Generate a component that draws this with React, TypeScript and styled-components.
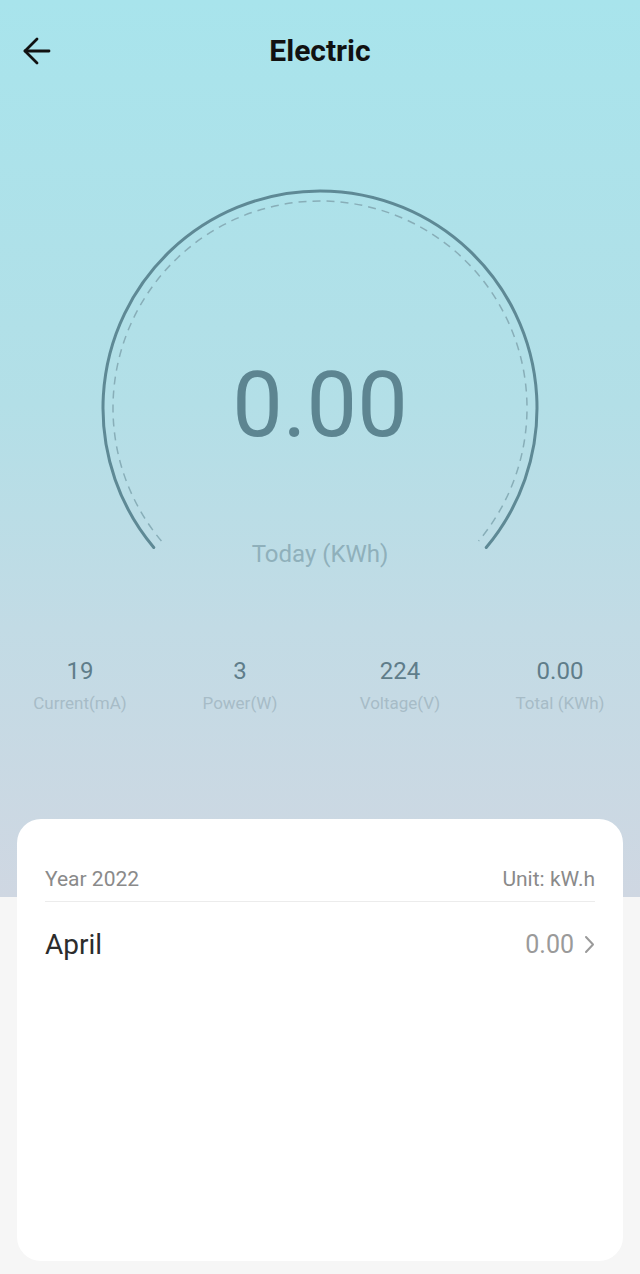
import styled, { createGlobalStyle } from 'styled-components'

const GlobalStyle = createGlobalStyle`
  html, body {
    margin: 0;
    padding: 0;
    background: #f6f6f6;
  }
  * {
    box-sizing: border-box;
  }
`

const Page = styled.div`
  min-height: 1274px;
  font-family: Roboto, "Noto Sans", sans-serif;
  background:
    linear-gradient(180deg, #a8e4ec 0%, #b3dfe7 45%, #c2dbe5 70%, #cfd7e2 100%) 0 0 / 100% 897px no-repeat,
    #f6f6f6;
  padding-bottom: 12px;
`

const Header = styled.div`
  height: 102px;
  display: grid;
  grid-template-columns: 1fr auto 1fr;
  align-items: center;
  padding: 0 22px;
`

const BackButton = styled.button`
  justify-self: start;
  width: 30px;
  height: 30px;
  padding: 0;
  border: none;
  background: none;
  display: flex;
  align-items: center;
  justify-content: center;
  cursor: pointer;
`

const Title = styled.h1`
  margin: 0;
  font-size: 30px;
  font-weight: 700;
  color: #111;
  line-height: 36px;
`

const GaugeWrap = styled.div`
  position: relative;
  width: 440px;
  height: 384px;
  margin: 84px auto 0;
  display: flex;
  flex-direction: column;
  align-items: center;
`

const GaugeArt = styled.svg`
  position: absolute;
  inset: 0;
`

const GaugeValue = styled.div`
  position: relative;
  margin-top: 175px;
  font-size: 90px;
  line-height: 90px;
  color: #5d8591;
`

const GaugeLabel = styled.div`
  position: relative;
  margin-top: 92px;
  font-size: 24px;
  line-height: 22px;
  color: #8fb0bb;
`

const Stats = styled.div`
  display: grid;
  grid-template-columns: repeat(4, 1fr);
  margin-top: 88px;
`

const Stat = styled.div`
  display: flex;
  flex-direction: column;
  align-items: center;
  gap: 9px;
`

const StatValue = styled.div`
  font-size: 24px;
  line-height: 26px;
  color: #5f7d8a;
`

const StatLabel = styled.div`
  font-size: 17px;
  line-height: 20px;
  color: #a7bcc7;
`

const Card = styled.div`
  margin: 106px 17px 0;
  height: 442px;
  background: #fff;
  border-radius: 24px;
  padding: 46px 28px 0;
`

const CardHead = styled.div`
  display: flex;
  justify-content: space-between;
  align-items: center;
  height: 28px;
  margin-bottom: 8px;
  font-size: 21px;
  color: #8a8a8a;
`

const Divider = styled.div`
  height: 1px;
  background: #ececec;
`

const MonthRow = styled.div`
  display: flex;
  justify-content: space-between;
  align-items: center;
  height: 30px;
  margin-top: 27px;
`

const Month = styled.div`
  font-size: 28px;
  color: #2c2c2c;
`

const MonthValue = styled.div`
  display: flex;
  align-items: center;
  gap: 10px;
  font-size: 25px;
  color: #9a9a9a;
`

const stats = [
  { value: '19', label: 'Current(mA)' },
  { value: '3', label: 'Power(W)' },
  { value: '224', label: 'Voltage(V)' },
  { value: '0.00', label: 'Total (KWh)' },
]

const arcPath = (r: number) => {
  const cx = 220
  const cy = 222
  const a1 = (140 * Math.PI) / 180
  const a2 = (40 * Math.PI) / 180
  const x1 = cx + r * Math.cos(a1)
  const y1 = cy + r * Math.sin(a1)
  const x2 = cx + r * Math.cos(a2)
  const y2 = cy + r * Math.sin(a2)
  return `M ${x1} ${y1} A ${r} ${r} 0 1 1 ${x2} ${y2}`
}

const App = () => {
  return (
    <Page>
      <GlobalStyle />
      <Header>
        <BackButton aria-label="Back">
          <svg width="30" height="30" viewBox="0 0 30 30" fill="none" stroke="#111" strokeWidth={2.8} strokeLinecap="round" strokeLinejoin="round">
            <path d="M27 15H3" />
            <path d="M15 3L3 15L15 27" />
          </svg>
        </BackButton>
        <Title>Electric</Title>
        <div />
      </Header>

      <GaugeWrap>
        <GaugeArt width="440" height="384" viewBox="0 0 440 384" fill="none">
          <path d={arcPath(217)} stroke="#5e8995" strokeWidth={3} strokeLinecap="round" />
          <path d={arcPath(207)} stroke="#88aeb8" strokeWidth={1.5} strokeDasharray="8 6" />
        </GaugeArt>
        <GaugeValue>0.00</GaugeValue>
        <GaugeLabel>Today (KWh)</GaugeLabel>
      </GaugeWrap>

      <Stats>
        {stats.map(s => (
          <Stat key={s.label}>
            <StatValue>{s.value}</StatValue>
            <StatLabel>{s.label}</StatLabel>
          </Stat>
        ))}
      </Stats>

      <Card>
        <CardHead>
          <span>Year 2022</span>
          <span>Unit: kW.h</span>
        </CardHead>
        <Divider />
        <MonthRow>
          <Month>April</Month>
          <MonthValue>
            0.00
            <svg width="11" height="19" viewBox="0 0 11 19" fill="none" stroke="#9a9a9a" strokeWidth={2} strokeLinecap="round" strokeLinejoin="round">
              <path d="M2 2L9 9.5L2 17" />
            </svg>
          </MonthValue>
        </MonthRow>
      </Card>
    </Page>
  )
}

export default App
